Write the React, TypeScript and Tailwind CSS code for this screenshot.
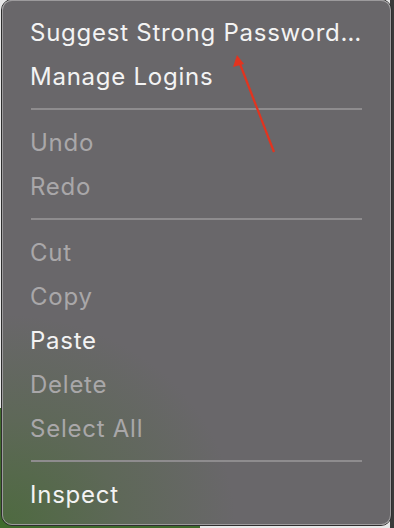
import React from "react";

type Item = { label: string; enabled: boolean } | { sep: true };

const items: Item[] = [
  { label: "Suggest Strong Password…", enabled: true },
  { label: "Manage Logins", enabled: true },
  { sep: true },
  { label: "Undo", enabled: false },
  { label: "Redo", enabled: false },
  { sep: true },
  { label: "Cut", enabled: false },
  { label: "Copy", enabled: false },
  { label: "Paste", enabled: true },
  { label: "Delete", enabled: false },
  { label: "Select All", enabled: false },
  { sep: true },
  { label: "Inspect", enabled: true },
];

export default function App() {
  return (
    <div
      className="relative w-[394px] h-[528px] overflow-hidden bg-[#e8e8e8]"
      style={{ fontFamily: "Inter, 'Noto Sans', 'Liberation Sans', sans-serif" }}
    >
      <div className="absolute left-0 bottom-0 w-[200px] h-[120px] bg-[#3f6b2c]" />
      <div className="absolute right-0 top-0 w-[4px] h-full bg-[#3a3a3a]" />
      <div className="absolute left-[1px] top-[-1px] w-[391px] h-[527px] rounded-[11px] border border-[#2e2e2e]">
        <div className="w-full h-full rounded-[10px] border border-[#9c9a9c] bg-[#69676a] bg-[radial-gradient(ellipse_60%_40%_at_0%_100%,#4e6a40_0%,#5e6858_50%,transparent_100%)] pt-[10px] pb-[7px]">
          {items.map((it, i) =>
            "sep" in it ? (
              <div key={i} className="h-[22px] flex items-center px-[28px]">
                <div className="h-[2px] w-full bg-[#8e8c8e] mb-[3px]" />
              </div>
            ) : (
              <div
                key={i}
                className={`h-[44px] flex items-center pl-[27px] text-[24px] font-normal tracking-[0.75px] ${
                  it.enabled ? "text-[#f3f3f3]" : "text-[#a9a7a9]"
                }`}
              >
                {it.label}
              </div>
            )
          )}
        </div>
      </div>
      <svg className="absolute left-0 top-0" width="394" height="528">
        <line x1="274" y1="152" x2="240" y2="64" stroke="#e2341f" strokeWidth="2.2" />
        <polygon points="237,55 233,67 244,64" fill="#e2341f" />
      </svg>
    </div>
  );
}
